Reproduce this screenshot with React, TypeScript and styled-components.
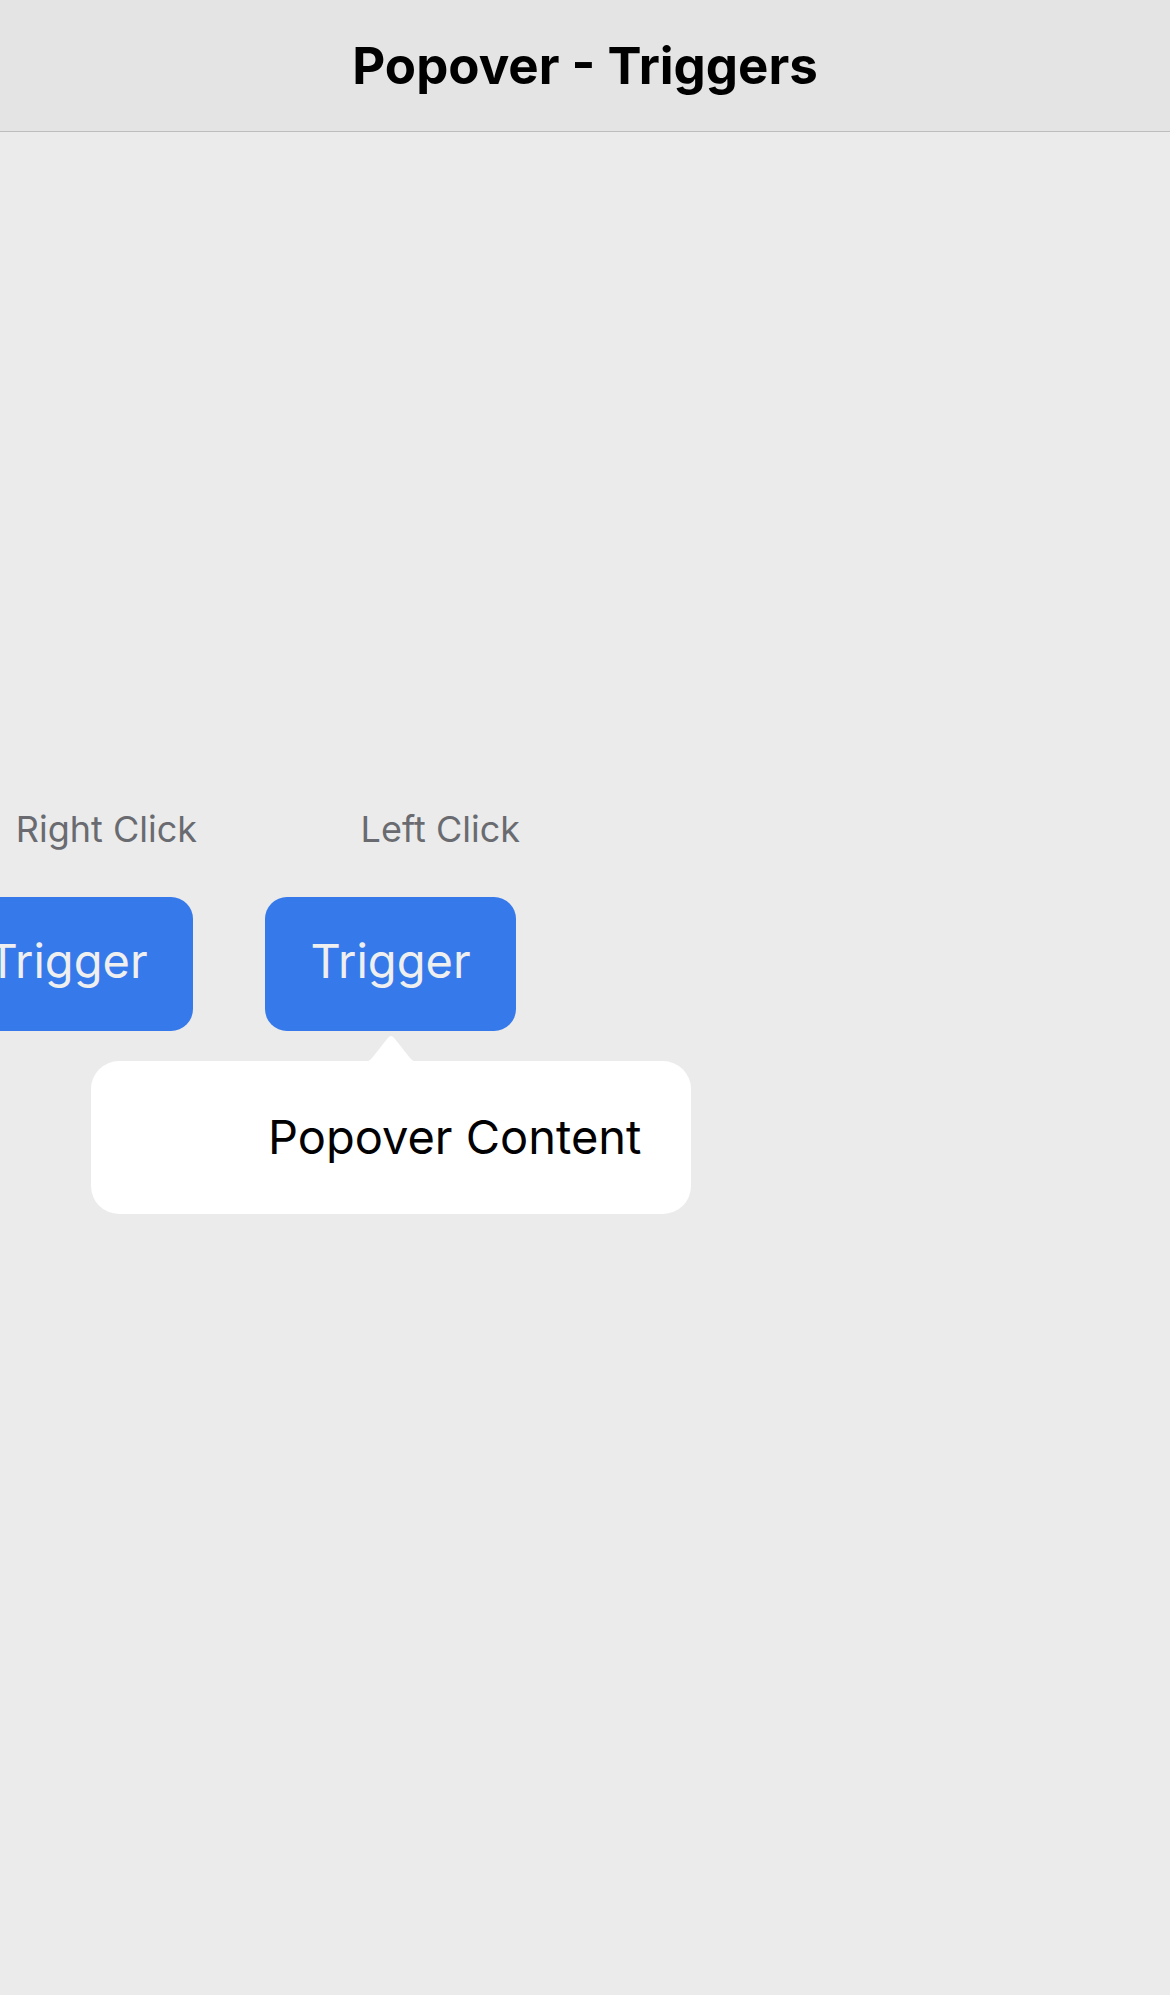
import React from 'react'
import styled, { createGlobalStyle } from 'styled-components'

const GlobalStyle = createGlobalStyle`
  html, body {
    margin: 0;
    padding: 0;
    background: #ebebeb;
    overflow: hidden;
  }
  * {
    box-sizing: border-box;
  }
`

const Screen = styled.div`
  width: 1170px;
  min-height: 1995px;
  display: flex;
  flex-direction: column;
  background: #ebebeb;
  font-family: Inter, 'Noto Sans', sans-serif;
`

const NavBar = styled.header`
  height: 132px;
  display: flex;
  align-items: center;
  justify-content: center;
  background: #e4e4e4;
  border-bottom: 1px solid #bdbdbd;
`

const NavTitle = styled.h1`
  margin: 0;
  font-size: 51px;
  font-weight: 700;
  color: #000;
  letter-spacing: 0;
`

const Stage = styled.main`
  flex: 1;
  padding-top: 676px;
`

const TriggerRow = styled.div`
  display: flex;
  flex-direction: row;
  gap: 72px;
  margin-left: -58px;
`

const TriggerColumn = styled.div`
  position: relative;
  display: flex;
  flex-direction: column;
  align-items: flex-end;
  gap: 45px;
`

const TriggerLabel = styled.span`
  margin-right: -4px;
  font-size: 36px;
  line-height: 1.21;
  color: #6a6b70;
`

const TriggerButton = styled.button`
  width: 251px;
  height: 134px;
  border: none;
  border-radius: 22px;
  background: #3579eb;
  color: #efefef;
  font-family: inherit;
  font-size: 47px;
  font-weight: 400;
  padding: 0 0 7px;
  cursor: pointer;
`

const Popover = styled.div`
  position: absolute;
  top: calc(100% + 30px);
  left: 50%;
  transform: translateX(-50%);
  width: 600px;
  height: 153px;
  display: flex;
  align-items: center;
  justify-content: flex-end;
  padding: 0 49px 2px 0;
  background: #fff;
  border-radius: 28px;
`

const PopoverArrow = styled.svg`
  position: absolute;
  top: -27px;
  left: 50%;
  transform: translateX(-50%);
  display: block;
`

const PopoverText = styled.span`
  font-size: 47px;
  color: #000;
`

type Trigger = {
  label: string
  open?: boolean
}

const triggers: Trigger[] = [
  { label: 'Right Click' },
  { label: 'Left Click', open: true },
]

export default function App() {
  return (
    <>
      <GlobalStyle />
      <Screen>
        <NavBar>
          <NavTitle>Popover - Triggers</NavTitle>
        </NavBar>
        <Stage>
          <TriggerRow>
            {triggers.map((t) => (
              <TriggerColumn key={t.label}>
                <TriggerLabel>{t.label}</TriggerLabel>
                <TriggerButton>Trigger</TriggerButton>
                {t.open ? (
                  <Popover>
                    <PopoverArrow width="54" height="28" viewBox="0 0 54 28">
                      <path
                        d="M0 28 C4 28 6 26 8 24 L23 5 Q27 -1 31 5 L46 24 C48 26 50 28 54 28 Z"
                        fill="#fff"
                      />
                    </PopoverArrow>
                    <PopoverText>Popover Content</PopoverText>
                  </Popover>
                ) : null}
              </TriggerColumn>
            ))}
          </TriggerRow>
        </Stage>
      </Screen>
    </>
  )
}
